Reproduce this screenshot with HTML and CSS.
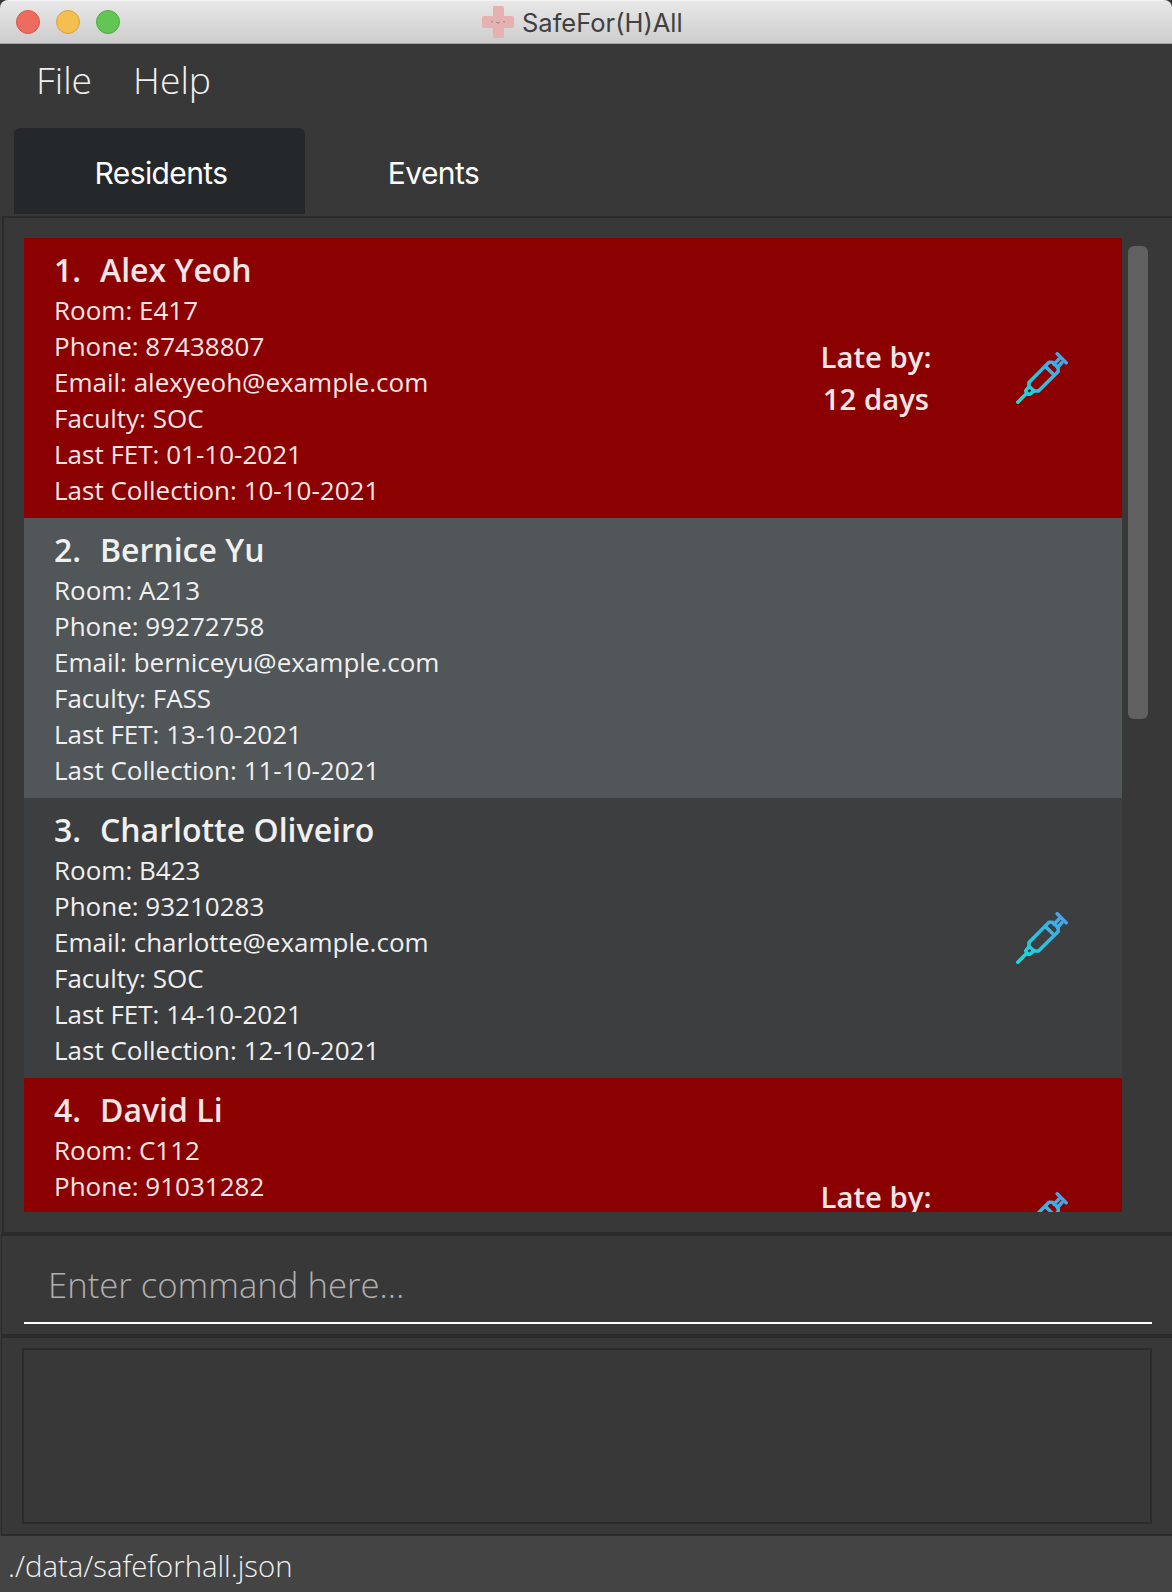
FILE: index.html
```html
<!DOCTYPE html>
<html lang="en">
<head>
<meta charset="utf-8">
<title>SafeFor(H)All</title>
<link rel="stylesheet" href="styles.css">
</head>
<body>
<svg class="defs" width="0" height="0" aria-hidden="true">
  <defs>
    <linearGradient id="syringe-ink" gradientUnits="userSpaceOnUse" x1="2" y1="50" x2="50" y2="2">
      <stop offset="0" stop-color="#12e0dc"/>
      <stop offset="1" stop-color="#4a9eea"/>
    </linearGradient>
    <symbol id="syringe" viewBox="0 0 52 52">
      <g fill="none" stroke="url(#syringe-ink)" stroke-width="3.5" stroke-linecap="round" stroke-linejoin="round">
        <path d="M1.800 50.200L11 41"/>
        <path d="M13 34.500L9.800 38.500Q9.500 40 12 42.200Q13.800 43 17.500 39"/>
        <path d="M13 34.500V30.500L33 10.200H36.500L42.200 15.800V19.500L22.500 39H18.500Z"/>
        <path d="M29.500 14.500L37.800 22.800"/>
        <path d="M38 12.300L43 7M41.500 15.500L46 10.500"/>
        <path d="M41.200 1.800L50.200 10.800"/>
      </g>
    </symbol>
  </defs>
</svg>
<div class="window">
  <header class="titlebar">
    <div class="lights"><i class="light close"></i><i class="light minimise"></i><i class="light expand"></i></div>
    <div class="title">
      <svg class="logo" viewBox="0 0 32 32">
        <path d="M12 0h8q2 0 2 2v8h8q2 0 2 2v8q0 2-2 2h-8v8q0 2-2 2h-8q-1 0-1-2v-8H2q-2 0-2-2v-8q0-2 2-2h9V2q0-2 1-2z" fill="#e5b1b1"/>
        <circle cx="10" cy="15.700" r=".8" fill="#8f8787"/><circle cx="22" cy="15.700" r=".8" fill="#8f8787"/>
        <path d="M14.200 16.300q1.800 1.400 3.600 0" fill="none" stroke="#8f8787"/>
      </svg>
      <span>SafeFor(H)All</span>
    </div>
  </header>
  <nav class="menubar"><span>File</span><span>Help</span></nav>
  <div class="tabs"><div class="tab active">Residents</div><div class="tab">Events</div></div>
  <main class="pane">
    <div class="list">
      <article class="card late">
        <div class="info">
          <h2><span>1.</span><span>Alex Yeoh</span></h2>
          <p>Room: E417</p><p>Phone: 87438807</p><p>Email: alexyeoh@example.com</p><p>Faculty: SOC</p><p>Last FET: 01-10-2021</p><p>Last Collection: 10-10-2021</p>
        </div>
        <div class="overdue">Late by:<br>12 days</div>
        <svg class="vaccinated"><use href="#syringe"/></svg>
      </article>
      <article class="card even">
        <div class="info">
          <h2><span>2.</span><span>Bernice Yu</span></h2>
          <p>Room: A213</p><p>Phone: 99272758</p><p>Email: berniceyu@example.com</p><p>Faculty: FASS</p><p>Last FET: 13-10-2021</p><p>Last Collection: 11-10-2021</p>
        </div>
      </article>
      <article class="card">
        <div class="info">
          <h2><span>3.</span><span>Charlotte Oliveiro</span></h2>
          <p>Room: B423</p><p>Phone: 93210283</p><p>Email: charlotte@example.com</p><p>Faculty: SOC</p><p>Last FET: 14-10-2021</p><p>Last Collection: 12-10-2021</p>
        </div>
        <svg class="vaccinated"><use href="#syringe"/></svg>
      </article>
      <article class="card late">
        <div class="info">
          <h2><span>4.</span><span>David Li</span></h2>
          <p>Room: C112</p><p>Phone: 91031282</p><p>Email: lidavid@example.com</p>
        </div>
        <div class="overdue">Late by:</div>
        <svg class="vaccinated"><use href="#syringe"/></svg>
      </article>
    </div>
    <div class="scrollbar"><div class="thumb"></div></div>
  </main>
  <section class="command"><div class="field">Enter command here...</div></section>
  <section class="result"><div class="output"></div></section>
  <footer class="status">./data/safeforhall.json</footer>
</div>
</body>
</html>
```
FILE: styles.css
```css
* { box-sizing: border-box; }
body { margin: 0; background: #383838; }
.defs { display: block; }
.window {
  display: flex;
  flex-direction: column;
  width: 1172px;
  height: 1592px;
  overflow: hidden;
  background: #383838;
  color: #f0f0f0;
  font-family: "Open Sans", "Noto Sans", sans-serif;
}
.titlebar {
  flex: none;
  display: grid;
  grid-template-columns: 482px 1fr;
  align-items: center;
  height: 44px;
  border-top: 1px solid #f4f4f4;
  border-bottom: 1px solid #a6a6a6;
  border-radius: 8px 8px 0 0;
  background: linear-gradient(#e8e8e8, #cdcdcd);
}
.lights { display: flex; gap: 16px; padding-left: 16px; }
.light { width: 24px; height: 24px; border-radius: 50%; border: 1px solid; }
.close { background: #ed6b5f; border-color: #d8574c; }
.minimise { background: #f5bf4f; border-color: #d9a33f; }
.expand { background: #61c654; border-color: #4dab40; }
.title { display: flex; align-items: center; gap: 8px; height: 42px; font: 400 25.500px/40px Inter, sans-serif; color: #404040; }
.title span { padding-top: 2px; }
.logo { width: 32px; height: 32px; }
.menubar { flex: none; display: flex; gap: 41px; height: 84px; padding: 7px 0 0 36px; font-size: 37.300px; font-weight: 300; line-height: 58px; }
.tabs { flex: none; display: flex; height: 88px; padding-left: 14px; font: 400 30px/90px Inter, sans-serif; letter-spacing: -.6px; color: #fff; }
.tab { width: 291px; height: 86px; padding-left: 3px; text-align: center; }
.tab + .tab { width: 255px; padding-left: 2px; }
.active { background: #24282b; border-radius: 6px 6px 0 0; }
.pane { flex: none; display: flex; height: 1018px; margin-left: 2px; padding: 20px 0 20px 20px; border: 2px solid #2b2b2b; border-right: 0; }
.list { width: 1098px; overflow: hidden; }
.card { display: grid; grid-template-columns: 752px 160px 1fr; align-items: center; height: 280px; padding: 10px 0 10px 30px; background: #3c3e3f; }
.even { background: #515658; }
.late { background: #8b0000; color: #f4e6e6; }
.info { align-self: start; font-size: 26px; line-height: 36px; }
.info h2 { display: flex; margin: 0; font-size: 32px; font-weight: 600; line-height: 44px; }
.info h2 span:first-child { width: 46px; }
.info p { margin: 0; }
.overdue { height: 84px; width: 140px; text-align: center; font-size: 29.300px; font-weight: 600; line-height: 42px; }
.vaccinated { grid-column: 3; width: 52px; height: 52px; margin-left: 50px; }
.scrollbar { padding: 8px 0 0 6px; }
.thumb { width: 20px; height: 473px; border-radius: 6px; background: #606060; }
.command { flex: none; height: 102px; margin-left: 1px; padding: 20px 20px 0 22px; border: solid #2b2b2b; border-width: 2px 0 2px 1px; }
.field { height: 68px; padding-left: 24px; border-bottom: 2px solid #fff; font-size: 34.700px; font-weight: 300; line-height: 58px; color: #b0b0b0; }
.result { flex: none; height: 200px; margin-left: 1px; padding: 10px 20px 10px 20px; border: solid #2b2b2b; border-width: 2px 0 2px 1px; }
.output { height: 176px; border: 2px solid #2b2b2b; }
.status { flex: 1; padding-left: 8px; font-size: 29.300px; font-weight: 300; line-height: 60px; background: #444; }
```
